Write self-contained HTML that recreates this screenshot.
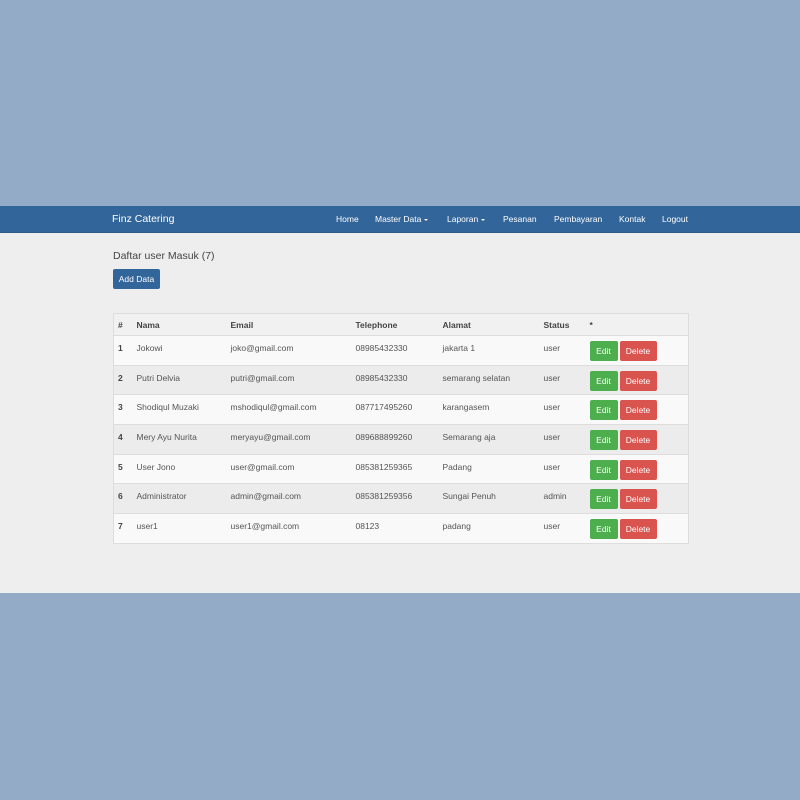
<!DOCTYPE html>
<html><head><meta charset="utf-8"><style>
*{margin:0;padding:0;box-sizing:border-box}
body{width:800px;height:800px;background:#94abc7;font-family:"Liberation Sans",Arial,sans-serif;position:relative;overflow:hidden}
.page{position:absolute;left:0;top:206px;width:800px;height:387px;background:#eeeeee}
.nav{position:absolute;left:0;top:0;width:800px;height:27px;background:#32659a;border-bottom:1px solid #2c5a89}
.brand{position:absolute;left:112px;top:7px;color:#fff;font-size:10.5px}
.nav span.l{position:absolute;top:8px;color:#fff;font-size:8.5px}
.caret{display:inline-block;border-left:2.5px solid transparent;border-right:2.5px solid transparent;border-top:2.5px solid #fff;vertical-align:middle;margin-left:3px}
h4{position:absolute;left:113px;top:44px;font-size:10.5px;font-weight:normal;color:#444}
.add{position:absolute;left:113px;top:63px;width:47px;height:20px;background:#32659a;border-radius:2px;color:#fff;font-size:8.5px;text-align:center;line-height:20px}
table{position:absolute;left:113px;top:107px;width:576px;border-collapse:collapse;border:1px solid #ddd;font-size:8.5px;color:#333}
th{height:22px;text-align:left;font-weight:bold;background:#f1f1f1;padding:0 0 0 4px;border-bottom:1px solid #ddd;color:#444}
td{height:29.7px;vertical-align:top;padding:7px 0 0 4px;border-top:1px solid #ddd;color:#555}
tr:nth-child(odd) td{background:#f9f9f9}
tr:nth-child(even) td{background:#ececec}
td.n{font-weight:bold;color:#444}
td.a{padding-top:5px}
.b{display:inline-block;height:20px;line-height:20px;color:#fff;border-radius:2px;text-align:center;font-size:8.5px}
.e{width:28px;background:#4cae4c}
.d{width:37px;background:#d9534f;margin-left:2px}
</style></head><body>
<div class="page">
<div class="nav">
<span class="brand">Finz Catering</span>
<span class="l" style="left:336px">Home</span>
<span class="l" style="left:375px">Master Data<i class="caret"></i></span>
<span class="l" style="left:447px">Laporan<i class="caret"></i></span>
<span class="l" style="left:503px">Pesanan</span>
<span class="l" style="left:554px">Pembayaran</span>
<span class="l" style="left:619px">Kontak</span>
<span class="l" style="left:662px">Logout</span>
</div>
<h4>Daftar user Masuk (7)</h4>
<div class="add">Add Data</div>
<table>
<thead><tr><th style="width:19px">#</th><th style="width:94px">Nama</th><th style="width:125px">Email</th><th style="width:87px">Telephone</th><th style="width:101px">Alamat</th><th style="width:46px">Status</th><th>*</th></tr></thead>
<tbody>
<tr><td class="n">1</td><td>Jokowi</td><td>joko@gmail.com</td><td>08985432330</td><td>jakarta 1</td><td>user</td><td class="a"><span class="b e">Edit</span><span class="b d">Delete</span></td></tr>
<tr><td class="n">2</td><td>Putri Delvia</td><td>putri@gmail.com</td><td>08985432330</td><td>semarang selatan</td><td>user</td><td class="a"><span class="b e">Edit</span><span class="b d">Delete</span></td></tr>
<tr><td class="n">3</td><td>Shodiqul Muzaki</td><td>mshodiqul@gmail.com</td><td>087717495260</td><td>karangasem</td><td>user</td><td class="a"><span class="b e">Edit</span><span class="b d">Delete</span></td></tr>
<tr><td class="n">4</td><td>Mery Ayu Nurita</td><td>meryayu@gmail.com</td><td>089688899260</td><td>Semarang aja</td><td>user</td><td class="a"><span class="b e">Edit</span><span class="b d">Delete</span></td></tr>
<tr><td class="n">5</td><td>User Jono</td><td>user@gmail.com</td><td>085381259365</td><td>Padang</td><td>user</td><td class="a"><span class="b e">Edit</span><span class="b d">Delete</span></td></tr>
<tr><td class="n">6</td><td>Administrator</td><td>admin@gmail.com</td><td>085381259356</td><td>Sungai Penuh</td><td>admin</td><td class="a"><span class="b e">Edit</span><span class="b d">Delete</span></td></tr>
<tr><td class="n">7</td><td>user1</td><td>user1@gmail.com</td><td>08123</td><td>padang</td><td>user</td><td class="a"><span class="b e">Edit</span><span class="b d">Delete</span></td></tr>
</tbody></table>
</div>
</body></html>
